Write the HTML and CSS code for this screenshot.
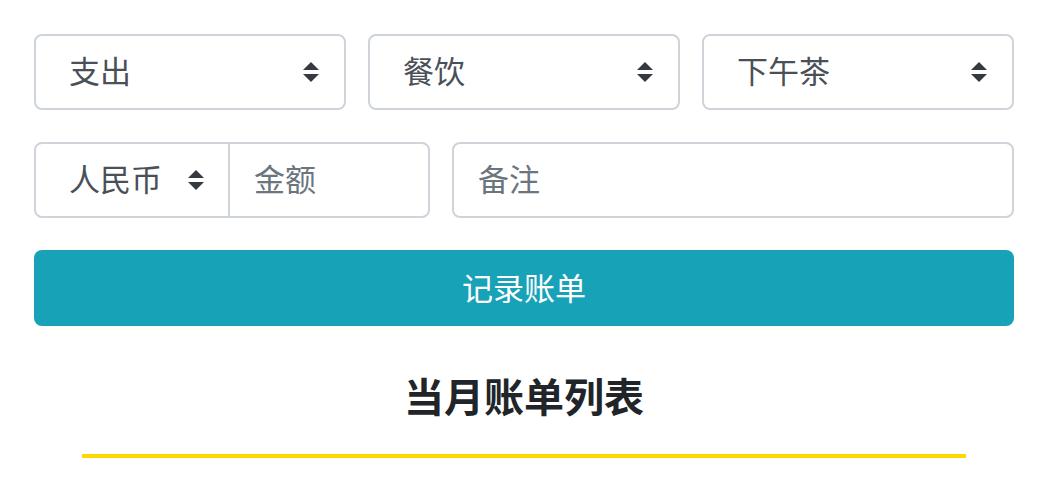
FILE: index.html
```html
<!DOCTYPE html>
<html lang="zh-CN">
<head>
    <meta charset="UTF-8">
    <meta name="viewport" content="width=device-width, initial-scale=1.0">
    <title>记账</title>
    <link rel="stylesheet" href="styles.css">
</head>
<body>

    <div class="container">
        <!-- 分类选择 -->
        <div class="row-three">
            <select class="custom-select">
                <option>支出</option>
                <option>收入</option>
            </select>
            <select class="custom-select">
                <option>餐饮</option>
                <option>交通</option>
            </select>
            <select class="custom-select">
                <option>下午茶</option>
                <option>早餐</option>
            </select>
        </div>

        <!-- 金额与备注 -->
        <div class="row-two">
            <div class="input-group">
                <select class="custom-select currency">
                    <option>人民币</option>
                    <option>美元</option>
                </select>
                <input type="number" class="form-control amount" placeholder="金额">
            </div>
            <input type="text" class="form-control" placeholder="备注">
        </div>

        <button type="button" class="btn">记录账单</button>

        <h2 class="list-title">当月账单列表</h2>
        <div class="divider"></div>
    </div>

</body>
</html>
```

FILE: styles.css
```css
body {
    margin: 0;
    font-family: "Noto Sans CJK SC", "Noto Sans", sans-serif;
    background: #fff;
    color: #212529;
}

.container {
    padding: 34px 30px 0 34px;
}

.row-three {
    display: grid;
    grid-template-columns: 1fr 1fr 1fr;
    gap: 22px;
}

.row-two {
    display: grid;
    grid-template-columns: 396px 1fr;
    gap: 22px;
    margin-top: 32px;
}

/* Form controls */
.custom-select,
.form-control {
    box-sizing: border-box;
    height: 76px;
    margin: 0;
    padding: 0 24px 5px 33px;
    font-family: inherit;
    font-size: 31px;
    color: #495057;
    background-color: #fff;
    border: 2px solid #ced4da;
    border-radius: 8px;
    outline: none;
}

.custom-select {
    width: 100%;
    appearance: none;
    -webkit-appearance: none;
    padding-right: 60px;
    background-image: url("data:image/svg+xml;charset=utf8,%3Csvg xmlns='http://www.w3.org/2000/svg' viewBox='0 0 4 5'%3E%3Cpath fill='%23343a40' d='M2 0L0 2h4zm0 5L0 3h4z'/%3E%3C/svg%3E");
    background-repeat: no-repeat;
    background-position: right 25px center;
    background-size: 16px 20px;
}

.form-control::placeholder {
    color: #6c757d;
}

.input-group {
    display: flex;
}

.input-group .currency {
    width: 196px;
    flex: none;
    border-top-right-radius: 0;
    border-bottom-right-radius: 0;
    background-position: right 24px center;
}

.input-group .amount {
    flex: 1;
    min-width: 0;
    margin-left: -2px;
    padding-left: 24px;
    border-top-left-radius: 0;
    border-bottom-left-radius: 0;
}

.row-two > .form-control {
    width: 100%;
    padding-left: 24px;
}

.btn {
    display: block;
    width: 100%;
    height: 76px;
    margin-top: 32px;
    padding: 0 0 4px;
    font-family: inherit;
    font-size: 31px;
    color: #fff;
    background-color: #17a2b8;
    border: none;
    border-radius: 8px;
    cursor: pointer;
}

.list-title {
    margin: 42px 0 0;
    font-size: 40px;
    line-height: 54px;
    font-weight: bold;
    text-align: center;
    color: #212529;
}

.divider {
    height: 4px;
    margin: 32px 48px 0;
    background-color: #ffd800;
}
```
